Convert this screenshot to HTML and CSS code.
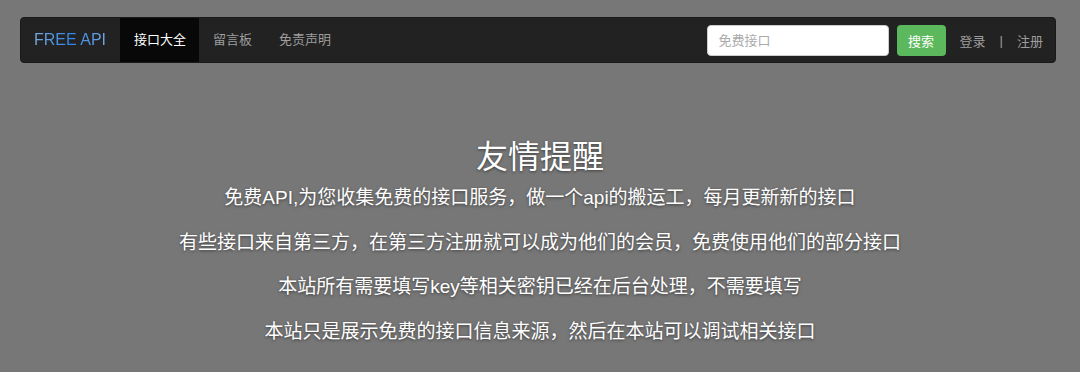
FILE: index.html
```html
<!DOCTYPE html>
<html lang="zh-CN">
<head>
    <meta charset="UTF-8">
    <meta name="viewport" content="width=device-width, initial-scale=1.0">
    <title>FREE API - 免费接口</title>
    <link rel="stylesheet" href="styles.css">
</head>
<body>

    <!-- Top navigation -->
    <nav class="navbar">
        <a class="brand" href="#">FREE API</a>
        <ul class="nav-links">
            <li><a class="active" href="#">接口大全</a></li>
            <li><a href="#">留言板</a></li>
            <li><a href="#">免责声明</a></li>
        </ul>

        <form class="search-form">
            <input type="text" class="search-input" placeholder="免费接口">
            <button type="button" class="search-btn">搜索</button>
        </form>

        <div class="user-links">
            <a href="#">登录</a>
            <span class="divider">|</span>
            <a href="#">注册</a>
        </div>
    </nav>

    <!-- Notice -->
    <div class="notice">
        <h1 class="notice-title">友情提醒</h1>
        <p>免费API,为您收集免费的接口服务，做一个api的搬运工，每月更新新的接口</p>
        <p>有些接口来自第三方，在第三方注册就可以成为他们的会员，免费使用他们的部分接口</p>
        <p>本站所有需要填写key等相关密钥已经在后台处理，不需要填写</p>
        <p>本站只是展示免费的接口信息来源，然后在本站可以调试相关接口</p>
    </div>

</body>
</html>
```

FILE: styles.css
```css
body {
    margin: 0;
    background-color: #777777;
    font-family: "Liberation Sans", "Noto Sans CJK SC", sans-serif;
    color: #fff;
}

a {
    text-decoration: none;
}

.navbar {
    display: flex;
    align-items: center;
    height: 46px;
    margin: 17px 24px 0 20px;
    background-color: #222;
    border: 1px solid #1a1a1a;
    border-radius: 4px;
    box-sizing: border-box;
}

.brand {
    padding: 0 14px 0 13px;
    font-size: 16px;
    line-height: 44px;
    background: linear-gradient(90deg, #93b6dc, #2f86e6 50%, #8fb4de);
    -webkit-background-clip: text;
    background-clip: text;
    color: transparent;
}

.nav-links {
    display: flex;
    list-style: none;
    margin: 0;
    padding: 0;
    height: 100%;
}

.nav-links a {
    display: block;
    padding: 0 13px 0 14px;
    font-size: 13px;
    line-height: 44px;
    color: #9d9d9d;
}

.nav-links a.active {
    background-color: #080808;
    color: #fff;
}

.search-form {
    display: flex;
    align-items: center;
    gap: 8px;
    margin-left: auto;
}

.search-input {
    width: 182px;
    height: 31px;
    box-sizing: border-box;
    padding: 0 11px;
    border: 1px solid #ccc;
    border-radius: 4px;
    font-size: 13px;
    font-family: inherit;
}

.search-input::placeholder {
    color: #aaa;
}

.search-btn {
    width: 49px;
    height: 31px;
    border: none;
    border-radius: 4px;
    background-color: #5cb85c;
    color: #fff;
    font-size: 13px;
    font-family: inherit;
}

.user-links {
    display: flex;
    align-items: center;
    gap: 14px;
    padding: 0 12px 0 14px;
    font-size: 13px;
    color: #9d9d9d;
}

.user-links a {
    color: #9d9d9d;
}

.notice {
    margin-top: 76px;
    text-align: center;
    text-shadow: 0 1px 3px rgba(0, 0, 0, 0.5);
}

.notice-title {
    margin: 0 0 1px;
    font-size: 32px;
    font-weight: normal;
    line-height: 36px;
}

.notice p {
    margin: 0;
    font-size: 19px;
    line-height: 44.7px;
}
```
